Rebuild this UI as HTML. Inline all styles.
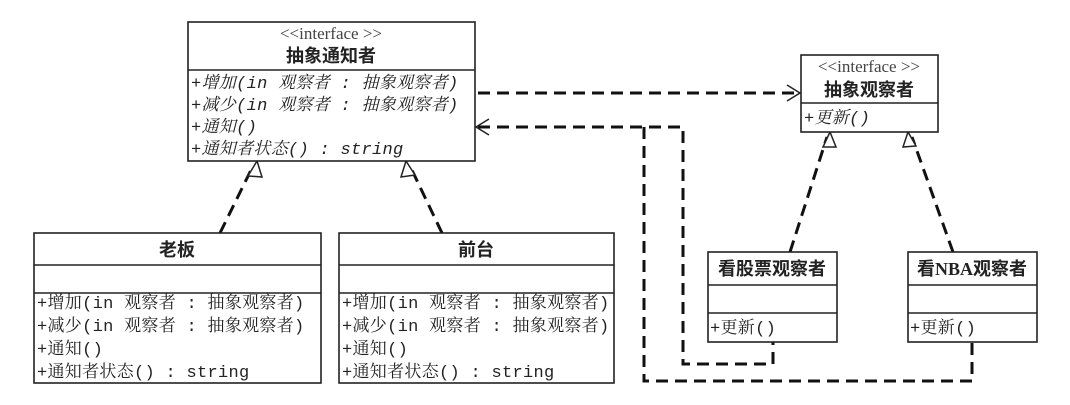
<!DOCTYPE html>
<html><head><meta charset="utf-8"><style>
html,body{margin:0;padding:0;background:#fff;}
svg{display:block;}
text{font-family:"Liberation Mono","Noto Serif CJK SC",monospace;font-size:17px;fill:#222;letter-spacing:0.3px;}
.b{font-family:"Liberation Serif","Noto Sans CJK SC",sans-serif;font-weight:bold;font-size:18px;letter-spacing:0;}
.s{font-family:"Liberation Serif","Noto Serif CJK SC",serif;font-size:17px;fill:#444;letter-spacing:0;}
.i{font-style:italic;}
.box{fill:#fff;stroke:#222;stroke-width:1.6;}
.d{fill:none;stroke:#111;stroke-width:3;stroke-dasharray:12 7;}
.ln{stroke:#222;stroke-width:1.4;}
</style></head><body>
<svg width="1070" height="405" viewBox="0 0 1070 405" xmlns="http://www.w3.org/2000/svg">
<path class="d" d="M478 93 H797"/>
<path class="d" d="M478 127 H683 V364 H773 V342"/>
<path class="d" d="M644 127 V381 H972 V342"/>
<path class="d" d="M220 233 L253 166"/>
<path class="d" d="M442 233 L410 166"/>
<path class="d" d="M790 252 L827 137"/>
<path class="d" d="M953 252 L912 137"/>
<polyline points="787,85 800,93 787,101" fill="none" stroke="#222" stroke-width="1.5"/>
<polyline points="489,119 476,127 489,135" fill="none" stroke="#222" stroke-width="1.5"/>
<polygon points="257,161 248,176 262,177" fill="#fff" stroke="#222" stroke-width="1.5"/>
<polygon points="406,161 401,177 415,175" fill="#fff" stroke="#222" stroke-width="1.5"/>
<polygon points="830,132 823,147 836,147" fill="#fff" stroke="#222" stroke-width="1.5"/>
<polygon points="908,132 903,147 916,146" fill="#fff" stroke="#222" stroke-width="1.5"/>

<rect class="box" x="188" y="22" width="287" height="139"/>
<line class="ln" x1="188" y1="70" x2="475" y2="70"/>
<text class="s" x="331" y="39" text-anchor="middle">&lt;&lt;interface &gt;&gt;</text>
<text class="b" x="331" y="62" text-anchor="middle">抽象通知者</text>
<text class="i" x="191" y="88">+增加(in 观察者 : 抽象观察者)</text>
<text class="i" x="191" y="110">+减少(in 观察者 : 抽象观察者)</text>
<text class="i" x="191" y="132">+通知()</text>
<text class="i" x="191" y="154">+通知者状态() : string</text>

<rect class="box" x="801" y="55" width="137" height="77"/>
<line class="ln" x1="801" y1="103" x2="938" y2="103"/>
<text class="s" x="869" y="72" text-anchor="middle">&lt;&lt;interface &gt;&gt;</text>
<text class="b" x="869" y="96" text-anchor="middle">抽象观察者</text>
<text class="i" x="804" y="123">+更新()</text>

<rect class="box" x="34" y="233" width="287" height="150"/>
<line class="ln" x1="34" y1="265" x2="321" y2="265"/>
<line class="ln" x1="34" y1="293" x2="321" y2="293"/>
<text class="b" x="177" y="256" text-anchor="middle">老板</text>
<text x="37" y="308">+增加(in 观察者 : 抽象观察者)</text>
<text x="37" y="331">+减少(in 观察者 : 抽象观察者)</text>
<text x="37" y="354">+通知()</text>
<text x="37" y="377">+通知者状态() : string</text>

<rect class="box" x="339" y="233" width="275" height="150"/>
<line class="ln" x1="339" y1="265" x2="614" y2="265"/>
<line class="ln" x1="339" y1="293" x2="614" y2="293"/>
<text class="b" x="476" y="256" text-anchor="middle">前台</text>
<text x="342" y="308">+增加(in 观察者 : 抽象观察者)</text>
<text x="342" y="331">+减少(in 观察者 : 抽象观察者)</text>
<text x="342" y="354">+通知()</text>
<text x="342" y="377">+通知者状态() : string</text>

<rect class="box" x="708" y="252" width="129" height="90"/>
<line class="ln" x1="708" y1="285" x2="837" y2="285"/>
<line class="ln" x1="708" y1="313" x2="837" y2="313"/>
<text class="b" x="772" y="275" text-anchor="middle">看股票观察者</text>
<text x="710" y="333">+更新()</text>

<rect class="box" x="908" y="252" width="129" height="90"/>
<line class="ln" x1="908" y1="285" x2="1037" y2="285"/>
<line class="ln" x1="908" y1="313" x2="1037" y2="313"/>
<text class="b" x="972" y="275" text-anchor="middle">看NBA观察者</text>
<text x="910" y="333">+更新()</text>
</svg>
</body></html>
